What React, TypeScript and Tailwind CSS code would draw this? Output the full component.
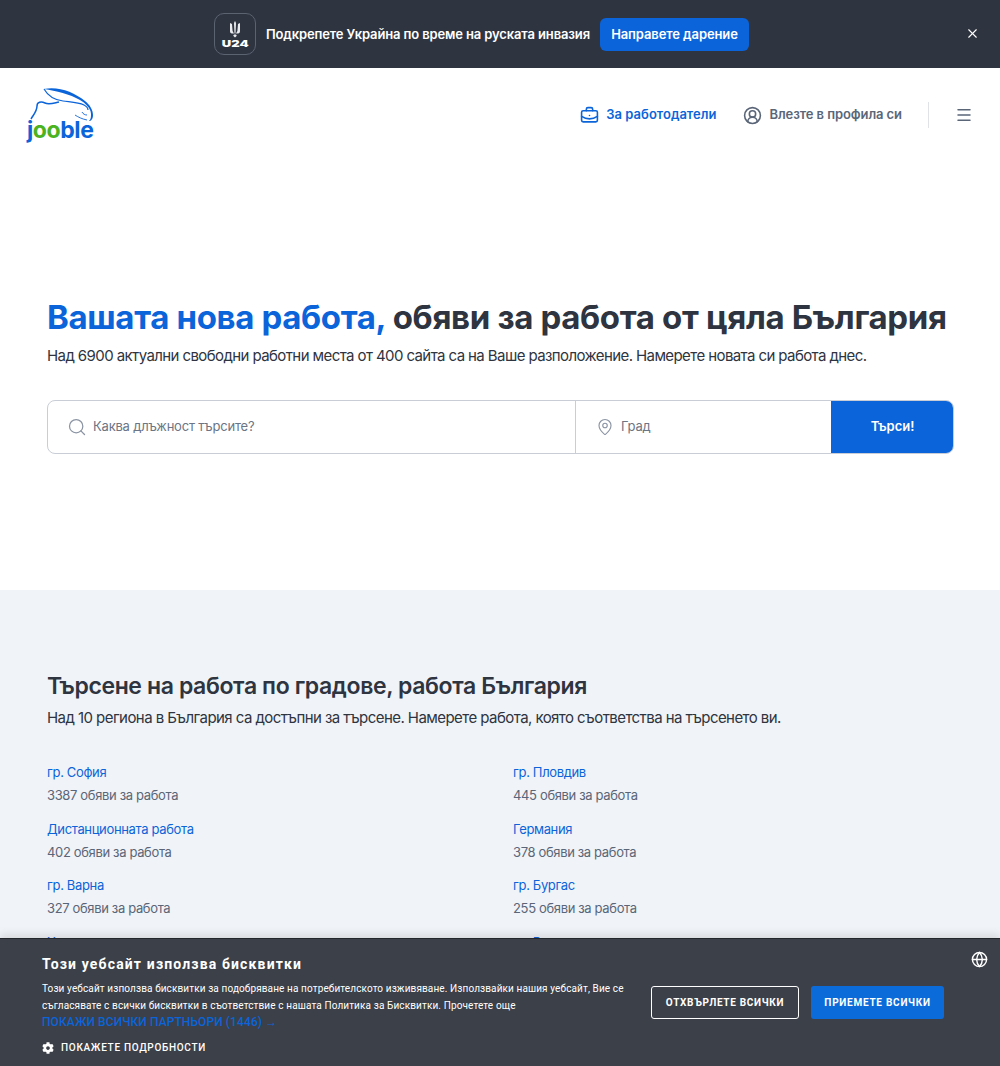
import { BriefcaseBusiness, CircleUserRound, Globe, MapPin, Menu, Search, X } from "lucide-react";
import { FaCog } from "react-icons/fa";

const cities = [
  { name: "гр. София", count: "3387 обяви за работа" },
  { name: "гр. Пловдив", count: "445 обяви за работа" },
  { name: "Дистанционната работа", count: "402 обяви за работа" },
  { name: "Германия", count: "378 обяви за работа" },
  { name: "гр. Варна", count: "327 обяви за работа" },
  { name: "гр. Бургас", count: "255 обяви за работа" },
  { name: "Холандия" },
  { name: "гр. Варшава" },
];

function U24Logo() {
  return (
    <div className="flex h-[42px] w-[42px] flex-col items-center justify-center rounded-[10px] border border-[#5b6270]">
      <svg width="12" height="17" viewBox="0 0 12 17" fill="#e8eaed">
        <path d="M5.500 0.500h1l.5 2-.5 10h-1l-.5-10zM1 2l2 1 .6 7 1.400 2.500H3C1.500 12.500 1 11.500 1 10zM11 2l-2 1-.6 7-1.400 2.500H9c1.500 0 2-1 2-2.500zM5 13.500h2l.8 1.200L6 16.500l-1.800-1.800z" />
      </svg>
      <span className="mt-[2px] scale-x-[1.45] text-[9px] leading-[8px] font-black text-white">U24</span>
    </div>
  );
}

function JoobleLogo() {
  return (
    <div className="flex w-[68px] flex-col items-start">
      <svg width="68" height="34" viewBox="0 0 68 34" fill="none" className="-mb-[1px]">
        {/* back and neck */}
        <path d="M5 31c3-5 6-8 6-13 0-4 4-5 8-3 4 2 9 0 14-1" stroke="#0b64d9" strokeWidth="1.5" />
        {/* ear, the thick outer edge */}
        <path d="M18 1c14-3 30 3 41 12 5 4 8 9 8 14 0 4-2 6-4 6 2-2 2-4 2-7 0-6-6-11-11-14C44 6 30 3 18 1z" fill="#0b64d9" />
        <path d="M18 1c4 7 11 11 19 12 7 1 15 1 21 4 2 1 4 3 4 5" stroke="#0b64d9" strokeWidth="1.2" />
        <path d="M61 32c-5-1-9-3-12-5M56 24c1 2 3 3 5 3" stroke="#0b64d9" strokeWidth="0.9" />
      </svg>
      <div className="pl-[1px] text-[23px] leading-[19px] font-bold tracking-[-0.4px] text-[#0b64d9]">
        j<span className="text-[#4bb31f]">oo</span>ble
      </div>
    </div>
  );
}

export default function App() {
  return (
    <div className="relative h-screen overflow-hidden bg-white font-['Inter',sans-serif] text-[#2e3440]">
      <div className="relative flex h-[68px] items-center justify-center bg-[#2f3441] pr-[37px]">
        <div className="flex items-center">
          <U24Logo />
          <span className="ml-[10px] pt-[1px] text-[13px] font-semibold tracking-[-0.13px] text-white">
            Подкрепете Украйна по време на руската инвазия
          </span>
          <button className="ml-[10px] h-[33px] w-[149px] rounded-[6px] bg-[#0b64d9] pt-[1px] text-[13px] font-semibold tracking-[-0.1px] text-white">
            Направете дарение
          </button>
        </div>
        <X className="absolute top-[26px] right-[20px] h-[15px] w-[15px] text-white" strokeWidth={1.8} />
      </div>

      <header className="flex h-[92px] items-center justify-between pr-[27px] pl-[26px]">
        <JoobleLogo />
        <nav className="mt-[2px] flex items-center text-[13px] font-semibold">
          <BriefcaseBusiness className="h-[19px] w-[19px] text-[#0b64d9]" strokeWidth={2} />
          <span className="ml-[7px] text-[#0b64d9]">За работодатели</span>
          <CircleUserRound className="ml-[27px] h-[19px] w-[19px] text-[#5a6678]" strokeWidth={2} />
          <span className="ml-[7px] tracking-[-0.08px] text-[#5a6678]">Влезте в профила си</span>
          <div className="mr-[26px] ml-[26px] h-[26px] w-px bg-[#dfe3e8]" />
          <Menu className="h-[18px] w-[18px] text-[#5a6678]" strokeWidth={2} />
        </nav>
      </header>

      <main className="h-[430px] px-[47px] pt-[134px]">
        <h1 className="text-[33px] leading-[46px] font-bold tracking-[-0.35px] whitespace-nowrap">
          <span className="text-[#0b64d9]">Вашата нова работа,</span> обяви за работа от цяла България
        </h1>
        <p className="mt-[4px] text-[15px] leading-[24px] tracking-[-0.59px] whitespace-nowrap">
          Над 6900 актуални свободни работни места от 400 сайта са на Ваше разположение. Намерете новата си работа днес.
        </p>
        <div className="mt-[32px] flex h-[54px] w-[907px] overflow-hidden rounded-[8px] border border-[#c9ced6]">
          <div className="flex w-[528px] items-center gap-[6px] border-r border-[#c9ced6] pl-[19px] text-[13px] tracking-[-0.2px] text-[#6b7585]">
            <Search className="h-[20px] w-[20px] text-[#8a94a3]" strokeWidth={1.5} />
            Каква длъжност търсите?
          </div>
          <div className="flex flex-1 items-center gap-[7px] pl-[20px] text-[13px] tracking-[-0.2px] text-[#6b7585]">
            <MapPin className="h-[18px] w-[18px] text-[#8a94a3]" strokeWidth={1.5} />
            Град
          </div>
          <button className="-my-px -mr-px w-[123px] bg-[#0b64d9] text-[13px] font-semibold text-white">Търси!</button>
        </div>
      </main>

      <section className="h-[476px] bg-[#f0f3f7] px-[47px] pt-[79px]">
        <h2 className="text-[23px] leading-[34px] font-semibold tracking-[-0.38px]">
          Търсене на работа по градове, работа България
        </h2>
        <p className="mt-[3px] text-[15px] leading-[24px] tracking-[-0.56px]">
          Над 10 региона в България са достъпни за търсене. Намерете работа, която съответства на търсенето ви.
        </p>
        <div className="mt-[31px] grid w-[906px] grid-cols-2 gap-x-[26px] gap-y-[10.5px]">
          {cities.map((city) => (
            <div key={city.name} className="text-[13px] leading-[23px] tracking-[-0.35px]">
              <div className="text-[#0b64d9]">{city.name}</div>
              {city.count && <div className="text-[#5a6678]">{city.count}</div>}
            </div>
          ))}
        </div>
      </section>

      {/* cookie bar */}
      <div className="absolute right-0 bottom-0 left-0 flex h-[128px] border-t border-[#23262b] bg-[#3c4048] font-['Roboto',sans-serif] text-white shadow-[0_-4px_8px_rgba(0,0,0,0.1)]">
        <div className="w-[651px] pt-[16px] pl-[42px]">
          <div className="text-[14px] leading-[18px] font-bold tracking-[1.15px]">Този уебсайт използва бисквитки</div>
          <p className="mt-[7px] w-[600px] text-[10px] leading-[17px] tracking-[0.12px]">
            Този уебсайт използва бисквитки за подобряване на потребителското изживяване. Използвайки нашия уебсайт, Вие се
            съгласявате с всички бисквитки в съответствие с нашата Политика за Бисквитки. Прочетете още
          </p>
          <div className="mt-[1px] text-[12px] leading-[15px] font-medium tracking-[0.1px] text-[#0b64d9]">
            ПОКАЖИ ВСИЧКИ ПАРТНЬОРИ (1446) →
          </div>
          <div className="mt-[10px] flex items-center gap-[7px] text-[10px] font-medium tracking-[0.7px]">
            <FaCog className="h-[12px] w-[12px] text-white" />
            ПОКАЖЕТЕ ПОДРОБНОСТИ
          </div>
        </div>
        <div className="flex items-start gap-[12px] pt-[47px]">
          <button className="h-[33px] w-[148px] rounded-[3px] border border-white text-[10px] font-bold tracking-[0.7px]">
            ОТХВЪРЛЕТЕ ВСИЧКИ
          </button>
          <button className="h-[33px] w-[133px] rounded-[3px] bg-[#0b6cd9] text-[10px] font-bold tracking-[0.75px]">
            ПРИЕМЕТЕ ВСИЧКИ
          </button>
        </div>
        <Globe className="absolute top-[12px] right-[12px] h-[17px] w-[17px] text-white" strokeWidth={2} />
      </div>
    </div>
  );
}
